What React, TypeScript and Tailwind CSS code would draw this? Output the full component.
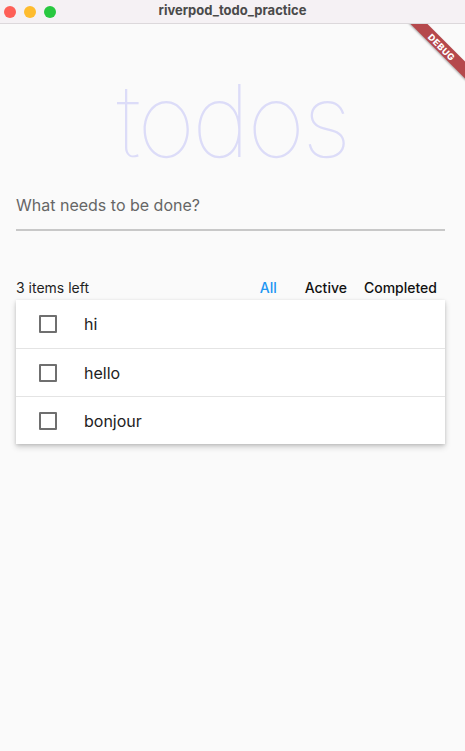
import React from "react";

const todos = ["hi", "hello", "bonjour"];

export default function App() {
  return (
    <div
      className="relative w-[465px] h-[751px] overflow-hidden bg-[#fafafa]"
      style={{ fontFamily: "Inter, 'Noto Sans', sans-serif" }}
    >
      {/* title bar */}
      <div className="relative h-[24px] bg-[#f5f1f4] border-b border-[#dcd8db] flex items-center">
        <div className="flex items-center gap-[8px] pl-[4px]">
          <span className="w-[12px] h-[12px] rounded-full bg-[#fe5f57]" />
          <span className="w-[12px] h-[12px] rounded-full bg-[#febc2e]" />
          <span className="w-[12px] h-[12px] rounded-full bg-[#28c840]" />
        </div>
        <div className="absolute inset-0 flex items-center justify-center text-[13px] font-bold text-[#4a4a4a] pb-[1px]">
          riverpod_todo_practice
        </div>
      </div>

      {/* content */}
      <div className="relative pl-[16px] pr-[20px]">
        {/* debug banner */}
        <div className="absolute top-0 right-0 w-[80px] h-[80px] overflow-hidden pointer-events-none">
          <div className="absolute left-[80px] top-[0px] w-0 h-0">
            <div className="absolute w-[110px] h-[12px] -left-[55px] -top-[6px] translate-x-[-23px] translate-y-[23px] rotate-45 bg-[#b5484c] shadow-[0_1px_2px_rgba(0,0,0,0.3)] flex items-center justify-center text-white text-[9px] font-extrabold tracking-[0.5px] leading-none">
              DEBUG
            </div>
          </div>
        </div>

        <div className="flex justify-center pt-[47px] pl-[4px] h-[153px]">
          <span className="text-[100px] leading-none font-thin text-[#dcdcf8] tracking-[-3px]">
            todos
          </span>
        </div>

        <div className="pt-[18px]">
          <div className="text-[16px] leading-[20px] text-[#666666] pb-[14px]">
            What needs to be done?
          </div>
          <div className="h-[2px] bg-[#c8c8c8]" />
        </div>

        <div className="mt-[46px] flex items-center h-[20px] text-[14px]">
          <span className="text-[#1f1f1f]">3 items left</span>
          <div className="flex-1" />
          <span className="font-medium text-[#2196f3] mr-[28px]">All</span>
          <span className="font-medium text-[#111] mr-[17px]">Active</span>
          <span className="font-medium text-[#111] mr-[8px]">Completed</span>
        </div>

        <div className="mt-[3px] bg-white shadow-[0_3px_6px_rgba(0,0,0,0.18),0_1px_3px_rgba(0,0,0,0.12)]">
          {todos.map((t, i) => (
            <div
              key={t}
              className={`h-[48px] flex items-center ${i > 0 ? "border-t border-[#e4e4e4]" : ""}`}
            >
              <span className="ml-[23px] w-[18px] h-[18px] border-2 border-[#6f6f6f] rounded-[1px]" />
              <span className="ml-[27px] text-[16px] text-[#222]">{t}</span>
            </div>
          ))}
        </div>
      </div>
    </div>
  );
}
